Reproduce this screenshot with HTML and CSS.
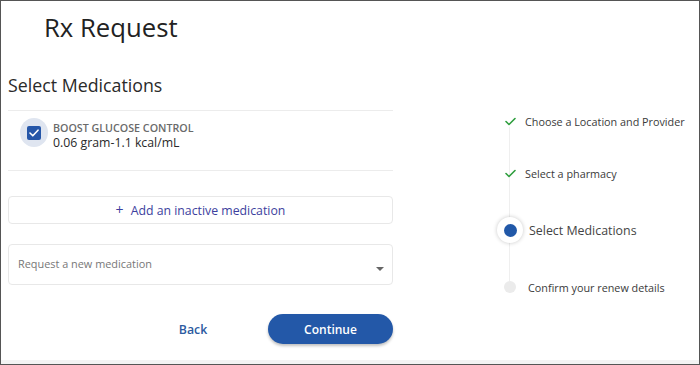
FILE: index.html
```html
<!DOCTYPE html>
<html lang="en">
<head>
<meta charset="utf-8">
<title>Rx Request</title>
<link rel="stylesheet" href="styles.css">
</head>
<body>
<div class="frame">
  <h1 class="title">Rx Request</h1>
  <div class="content">
    <section class="left">
      <h2 class="section-title">Select Medications</h2>
      <div class="med-row">
        <span class="check-halo"><span class="checkbox"><svg width="10" height="8" viewBox="0 0 10 8"><polyline points="1,4 3.8,6.8 9,1.2" fill="none" stroke="#fff" stroke-width="1.6" stroke-linecap="round" stroke-linejoin="round"/></svg></span></span>
        <div class="med-text">
          <div class="med-name">BOOST GLUCOSE CONTROL</div>
          <div class="med-dose">0.06 gram-1.1 kcal/mL</div>
        </div>
      </div>
      <button class="add-btn"><span class="plus">+</span>Add an inactive medication</button>
      <div class="select">
        <span class="placeholder">Request a new medication</span>
        <span class="caret"></span>
      </div>
      <div class="actions">
        <button class="back-btn">Back</button>
        <button class="continue-btn">Continue</button>
      </div>
    </section>
    <aside class="stepper">
      <span class="rail"></span>
      <div class="step step-done step-first">
        <span class="step-icon"><svg width="11" height="9" viewBox="0 0 11 9"><polyline points="1,4.5 4,7.5 10,1.5" fill="none" stroke="#2e9e3e" stroke-width="1.6" stroke-linecap="round" stroke-linejoin="round"/></svg></span>
        <span class="step-label">Choose a Location and Provider</span>
      </div>
      <div class="step step-done">
        <span class="step-icon"><svg width="11" height="9" viewBox="0 0 11 9"><polyline points="1,4.5 4,7.5 10,1.5" fill="none" stroke="#2e9e3e" stroke-width="1.6" stroke-linecap="round" stroke-linejoin="round"/></svg></span>
        <span class="step-label">Select a pharmacy</span>
      </div>
      <div class="step step-active">
        <span class="step-icon"><span class="active-ring"><span class="active-dot"></span></span></span>
        <span class="step-label">Select Medications</span>
      </div>
      <div class="step step-todo">
        <span class="step-icon"><span class="todo-dot"></span></span>
        <span class="step-label">Confirm your renew details</span>
      </div>
    </aside>
  </div>
  <div class="footer-strip"></div>
</div>
</body>
</html>
```
FILE: styles.css
```css
* { box-sizing: border-box; }
html, body { margin: 0; padding: 0; background: #fff; }
body { font-family: "Open Sans", "Liberation Sans", sans-serif; color: #333; }

.frame {
  width: 700px;
  height: 365px;
  border: 1px solid #555;
  display: flex;
  flex-direction: column;
  overflow: hidden;
}

.title {
  margin: 0;
  padding: 9px 0 0 43px;
  font-size: 25.7px;
  line-height: 36px;
  font-weight: 400;
  color: #222;
}

.content {
  display: flex;
  flex: 1;
}

.left {
  width: 385px;
  margin-left: 7px;
  padding-top: 27px;
  display: flex;
  flex-direction: column;
}

.section-title {
  margin: 0 0 13px 0;
  font-size: 17.8px;
  line-height: 24px;
  font-weight: 400;
  color: #2a2a2a;
}

.med-row {
  height: 61px;
  border-top: 1px solid #ececec;
  border-bottom: 1px solid #ececec;
  display: flex;
  align-items: flex-start;
  padding: 7px 0 0 12px;
}

.check-halo {
  width: 28px;
  height: 29px;
  border-radius: 50%;
  background: #dfe5f0;
  display: flex;
  align-items: center;
  justify-content: center;
  flex-shrink: 0;
}

.checkbox {
  width: 14px;
  height: 14px;
  border-radius: 2px;
  background: #2556a8;
  display: flex;
  align-items: center;
  justify-content: center;
}

.med-text {
  margin-left: 5px;
  margin-top: 3px;
}

.med-name {
  font-size: 10.7px;
  line-height: 14px;
  font-weight: 600;
  color: #6a6a6a;
}

.med-dose {
  font-size: 12.3px;
  line-height: 15px;
  color: #2a2a2a;
}

.add-btn {
  margin-top: 25px;
  height: 28px;
  width: 100%;
  border: 1px solid #e8e8e8;
  border-radius: 4px;
  background: #fff;
  font-family: inherit;
  font-size: 12.3px;
  color: #3d3f9e;
  display: flex;
  align-items: center;
  justify-content: center;
  padding: 0;
  cursor: pointer;
}

.plus {
  font-size: 14px;
  margin-right: 7px;
  line-height: 1;
}

.select {
  margin-top: 20px;
  height: 41px;
  border: 1px solid #e8e8e8;
  border-radius: 4px;
  display: flex;
  align-items: center;
  justify-content: space-between;
  padding: 0 8px 0 9px;
}

.placeholder {
  font-size: 10.9px;
  color: #777;
  margin-top: -2px;
}

.caret {
  width: 0;
  height: 0;
  border-left: 4px solid transparent;
  border-right: 4px solid transparent;
  border-top: 4px solid #666;
  margin-top: 8px;
}

.actions {
  margin-top: 29px;
  display: flex;
  justify-content: flex-end;
  align-items: center;
}

.back-btn {
  width: 100px;
  height: 30px;
  margin-right: 25px;
  background: none;
  border: none;
  font-family: inherit;
  font-size: 12.3px;
  font-weight: 600;
  color: #2c5aa0;
  padding: 0;
}

.continue-btn {
  width: 125px;
  height: 30px;
  border: none;
  border-radius: 15px;
  background: #2358a8;
  color: #fff;
  font-family: inherit;
  font-size: 12px;
  font-weight: 600;
  box-shadow: 0 2px 3px rgba(0,0,0,0.25);
  padding: 0;
}

.stepper {
  position: relative;
  margin-left: 104px;
  padding-top: 62px;
  display: flex;
  flex-direction: column;
}

.rail {
  position: absolute;
  left: 12px;
  top: 81px;
  width: 1px;
  height: 154px;
  background: #efefef;
}

.step {
  position: relative;
  height: 26px;
  display: flex;
  align-items: center;
}

.step + .step { margin-top: 31px; }
.step-done + .step-done { margin-top: 26px; }

.step-icon {
  width: 26px;
  height: 26px;
  display: flex;
  align-items: center;
  justify-content: center;
}

.step-label {
  font-size: 10.8px;
  color: #3a3a3a;
  margin-left: 2px;
}

.step-active .step-label {
  font-size: 12.4px;
  margin-left: 6px;
  color: #444;
}

.step-todo .step-label { margin-left: 5px; }

.active-ring {
  width: 26px;
  height: 26px;
  border-radius: 50%;
  background: #fff;
  box-shadow: 0 0 4px rgba(0,0,0,0.22);
  display: flex;
  align-items: center;
  justify-content: center;
}

.active-dot {
  width: 13px;
  height: 13px;
  border-radius: 50%;
  background: #2158a8;
}

.todo-dot {
  width: 12px;
  height: 12px;
  border-radius: 50%;
  background: #ebebeb;
}

.footer-strip {
  height: 4px;
  background: #f3f3f3;
}
```
